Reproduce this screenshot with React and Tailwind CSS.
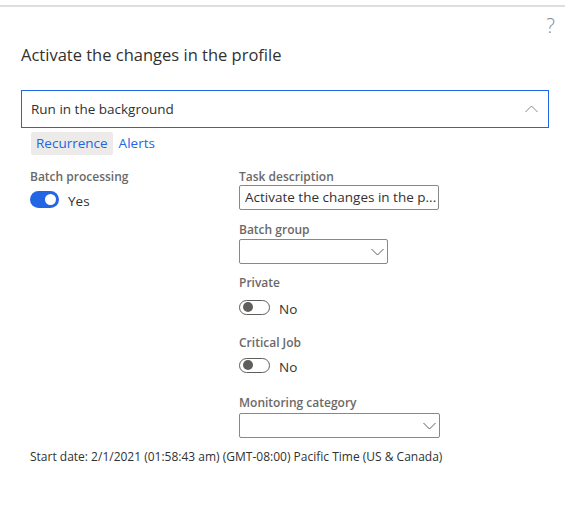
const font = { fontFamily: '"Segoe UI", "Open Sans", sans-serif' };

function Chevron({ up, className = "" }) {
  return (
    <svg width="13" height="8" viewBox="0 0 13 8" className={className}>
      <polyline
        points={up ? "0.5,7 6.5,1 12.5,7" : "0.5,1 6.5,7 12.5,1"}
        fill="none"
        stroke="currentColor"
        strokeWidth="1"
      />
    </svg>
  );
}

function Toggle({ on, label }) {
  return (
    <div className="flex items-center gap-[9px] h-[20px]">
      {on ? (
        <span className="w-[29px] h-[17px] rounded-full bg-[#2266e3] flex items-center justify-end pr-[3px]">
          <span className="w-[11px] h-[11px] rounded-full bg-white" />
        </span>
      ) : (
        <span className="w-[31px] h-[15px] rounded-full border border-[#605e5c] bg-white flex items-center pl-[3px]">
          <span className="w-[10px] h-[10px] rounded-full bg-[#605e5c]" />
        </span>
      )}
      <span className="text-[13.5px] text-[#323130] mt-[4px]">{label}</span>
    </div>
  );
}

function Label({ children }) {
  return <div className="text-[12px] font-semibold text-[#6b6967] leading-[16px]">{children}</div>;
}

function Select({ width }) {
  return (
    <div className={`${width} h-[25px] border border-[#8a8886] rounded-[2px] flex items-center justify-end pr-[3px]`}>
      <Chevron className="text-[#605e5c]" />
    </div>
  );
}

export default function App() {
  return (
    <div className="w-[569px] h-[508px] bg-white pt-[5px] text-[#323130]" style={font}>
      <div className="h-[2px] bg-[#e1dfdd] mr-[4px]" />

      <div className="flex justify-end pr-[14px] h-[30px] pt-[6px]">
        <span className="text-[20px] font-light text-[#8a8886] leading-[26px]">?</span>
      </div>

      <h1 className="pl-[21px] text-[16.5px] leading-[24px] mt-[6px]">Activate the changes in the profile</h1>

      <div className="mx-[20px] ml-[21px] mt-[23px] h-[38px] border border-[#2266e3] flex items-center justify-between pl-[9px] pr-[10px]">
        <span className="text-[13.5px]">Run in the background</span>
        <Chevron up className="text-[#8a8886]" />
      </div>

      <div className="flex items-center pl-[31px] mt-[4px] gap-[6px] text-[13.5px] text-[#2266e3]">
        <span className="bg-[#edebe9] rounded-[2px] h-[23px] px-[5px] flex items-center">Recurrence</span>
        <span>Alerts</span>
      </div>

      <div className="grid grid-cols-[209px_1fr] pl-[30px] mt-[14px]">
        <div>
          <Label>Batch processing</Label>
          <div className="mt-[4px]">
            <Toggle on label="Yes" />
          </div>
        </div>

        <div className="flex flex-col">
          <Label>Task description</Label>
          <div className="w-[200px] h-[25px] border border-[#8a8886] rounded-[2px] flex items-center px-[5px] text-[13.5px] whitespace-nowrap overflow-hidden">
            Activate the changes in the p...
          </div>

          <div className="mt-[12px]">
            <Label>Batch group</Label>
          </div>
          <div className="mt-[1px]">
            <Select width="w-[149px]" />
          </div>

          <div className="mt-[11px]">
            <Label>Private</Label>
          </div>
          <div className="mt-[6px]">
            <Toggle label="No" />
          </div>

          <div className="mt-[18px]">
            <Label>Critical Job</Label>
          </div>
          <div className="mt-[4px]">
            <Toggle label="No" />
          </div>

          <div className="mt-[20px]">
            <Label>Monitoring category</Label>
          </div>
          <div className="mt-[2px]">
            <Select width="w-[201px]" />
          </div>
        </div>
      </div>

      <div className="pl-[30px] mt-[10px] text-[12px] text-[#323130]">
        Start date: 2/1/2021 (01:58:43 am) (GMT-08:00) Pacific Time (US &amp; Canada)
      </div>
    </div>
  );
}
